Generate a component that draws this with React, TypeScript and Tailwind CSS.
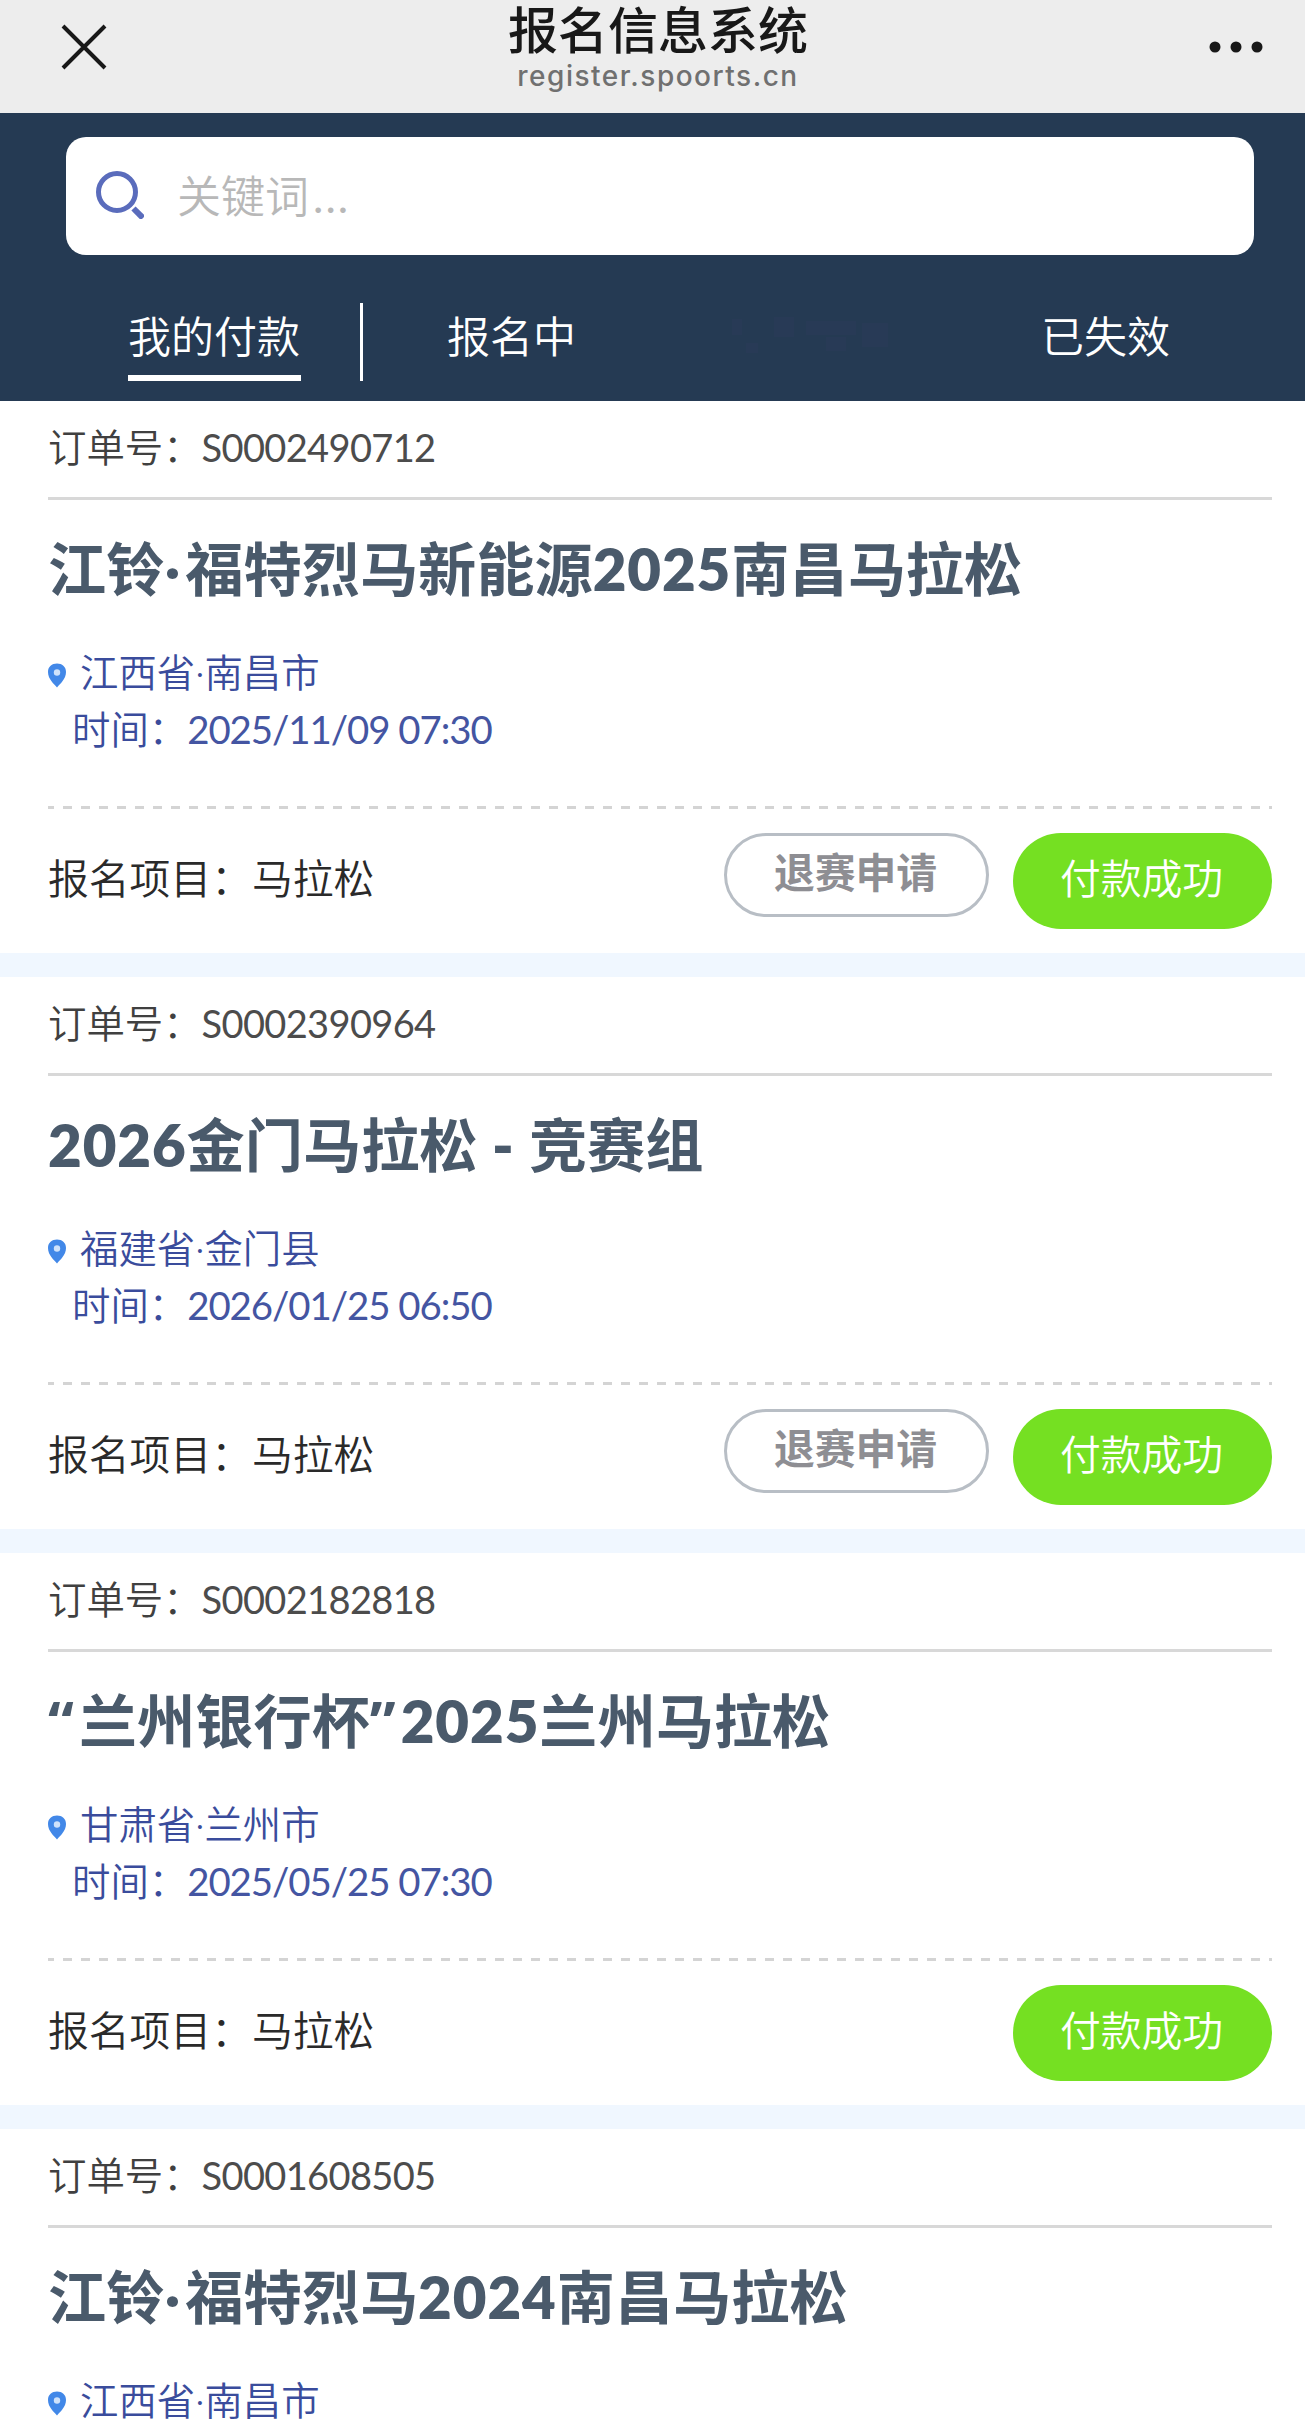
import React from 'react';

interface Order {
  no: string;
  title: React.ReactNode;
  place: string;
  time?: string;
  event?: string;
  refundable?: boolean;
}

const Dot = () => <span className="tracking-[5px]">·</span>;
const Num = ({ children }: { children: React.ReactNode }) => <span className="font-extrabold tracking-[0.900px]">{children}</span>;
const Quote = ({ children }: { children: React.ReactNode }) => <span className="font-['Open_Sans'] tracking-[5px]">{children}</span>;

const orders: Order[] = [
  {
    no: 'S0002490712',
    title: <>江铃<Dot />福特烈马新能源<Num>2025</Num>南昌马拉松</>,
    place: '江西省·南昌市',
    time: '2025/11/09 07:30',
    event: '马拉松',
    refundable: true,
  },
  {
    no: 'S0002390964',
    title: <><Num>2026</Num>金门马拉松<Num> - </Num>竞赛组</>,
    place: '福建省·金门县',
    time: '2026/01/25 06:50',
    event: '马拉松',
    refundable: true,
  },
  {
    no: 'S0002182818',
    title: <><Quote>“</Quote>兰州银行杯<Quote>”</Quote><Num>2025</Num>兰州马拉松</>,
    place: '甘肃省·兰州市',
    time: '2025/05/25 07:30',
    event: '马拉松',
  },
  {
    no: 'S0001608505',
    title: <>江铃<Dot />福特烈马<Num>2024</Num>南昌马拉松</>,
    place: '江西省·南昌市',
  },
];

function PinIcon() {
  return (
    <svg width="18" height="25" viewBox="0 0 18 25" className="mt-1.5 shrink-0">
      <path d="M9 24.500C6 21 0 16 0 9C0 3.500 4 0.500 9 0.500s9 3 9 8.500c0 7-6 12-9 15.500z" fill="#4288e8" />
      <circle cx="9" cy="9.500" r="3.200" fill="#cfe2fb" />
    </svg>
  );
}

function TopBar() {
  return (
    <div className="h-[113px] bg-[#ededed] flex justify-between px-[61px] text-[#181818]">
      <svg width="46" height="46" viewBox="0 0 46 46" className="mt-6 shrink-0">
        <path d="M2 2L44 44M44 2L2 44" stroke="#181818" strokeWidth="4" />
      </svg>
      <div className="flex flex-col items-center">
        <h1 className="text-[50px] leading-[60px] font-medium">报名信息系统</h1>
        <p className="font-['Inter','Noto_Sans_CJK_SC',sans-serif] text-[28px] leading-8 font-medium tracking-[1.500px] text-[#707070]">register.spoorts.cn</p>
      </div>
      <svg width="54" height="12" viewBox="0 0 54 12" className="mt-[41px] -mr-[19px] shrink-0">
        <circle cx="6" cy="6" r="5.500" fill="#181818" />
        <circle cx="27" cy="6" r="5.500" fill="#181818" />
        <circle cx="48" cy="6" r="5.500" fill="#181818" />
      </svg>
    </div>
  );
}

function Nav() {
  return (
    <div className="h-[288px] bg-[#253a53] pt-6">
      <div className="ml-[66px] mr-[51px] h-[118px] rounded-[20px] bg-white flex items-center pl-[30px]">
        <svg width="48" height="48" viewBox="0 0 48 48" className="-mt-0.5 shrink-0">
          <circle cx="21" cy="21" r="18.500" fill="none" stroke="#5a6cbc" strokeWidth="5" />
          <path d="M37.500 37.500L47 47" stroke="#5a6cbc" strokeWidth="6" />
        </svg>
        <span className="ml-[33px] text-[44px] leading-[60px] font-[350] text-[#b8b8b8]">
          关键词<span className="ml-1 font-normal tracking-[2px]">...</span>
        </span>
      </div>
      <div className="mt-12 flex h-[78px] text-[43px] leading-[67px] font-[350] text-white">
        <div className="w-[360px] pl-32">
          <div className="w-[173px] h-[78px] border-b-6 border-white whitespace-nowrap">我的付款</div>
        </div>
        <div className="w-[3px] bg-white" />
        <div className="w-[297px] text-center">报名中</div>
        {/* disabled tab, only a faint trace of it shows */}
        <div className="w-[297px] pl-[70px] pt-3">
          <svg width="164" height="46" viewBox="0 0 164 46" fill="#2a3a58" opacity="0.6">
            <rect x="2" y="4" width="10" height="16" />
            <rect x="44" y="2" width="20" height="20" />
            <rect x="76" y="6" width="50" height="14" />
            <rect x="96" y="22" width="20" height="14" />
            <rect x="132" y="8" width="26" height="24" />
            <rect x="16" y="28" width="12" height="10" />
          </svg>
        </div>
        <div className="w-[297px] text-center">已失效</div>
      </div>
    </div>
  );
}

function OrderCard({ order }: { order: Order }) {
  return (
    <section className="h-[552px] shrink-0 bg-white pl-12 pr-[33px]">
      <div className="h-[99px] border-b-3 border-[#d8d8d8] pt-[17px] text-[38.400px] leading-[58px] font-[350] text-[#404040]">
        订单号：<span className="text-[38px] font-normal tracking-[-0.650px] text-[#4c4c4c]">{order.no}</span>
      </div>
      <h2 className="mt-[33px] text-[58.200px] leading-[72px] font-bold text-[#4a5a6b]">{order.title}</h2>
      <div className="mt-[39px] text-[38.400px] leading-[57px] font-[350] text-[#3a4c9c]">
        <div className="flex items-center gap-[14px]">
          <PinIcon />
          <span>{order.place}</span>
        </div>
        {order.time && (
          <div className="pl-6">
            时间：<span className="font-normal tracking-[-1.050px] text-[#4455a2]">{order.time}</span>
          </div>
        )}
      </div>
      {order.event && (
        <>
          <svg width="1224" height="3" className="mt-[48px] block">
            <path d="M-3 1.500H1224" stroke="#d4d4d4" strokeWidth="3" strokeDasharray="9 9" />
          </svg>
          <div className="mt-6 flex items-start text-[40.800px]">
            <div className="flex-1 pt-4 leading-[60px] font-[350] text-[#2a2a2a]">报名项目：{order.event}</div>
            {order.refundable && (
              <button className="mr-6 h-[84px] w-[265px] rounded-full border-3 border-[#b8bec5] pb-1 pr-0.5 font-bold leading-[72px] text-[#8e8e93]">
                退赛申请
              </button>
            )}
            <button className="h-24 w-[259px] rounded-full bg-[#75e022] leading-[90px] pb-1 pr-0.5 font-[350] text-white">付款成功</button>
          </div>
        </>
      )}
    </section>
  );
}

export default function App() {
  return (
    <div className="h-[2425px] w-[1305px] overflow-hidden bg-[#f0f7ff] font-['Lato','Noto_Sans_CJK_SC',sans-serif]">
      <TopBar />
      <Nav />
      <div className="flex flex-col gap-6">
        {orders.map((order) => (
          <OrderCard key={order.no} order={order} />
        ))}
      </div>
    </div>
  );
}
